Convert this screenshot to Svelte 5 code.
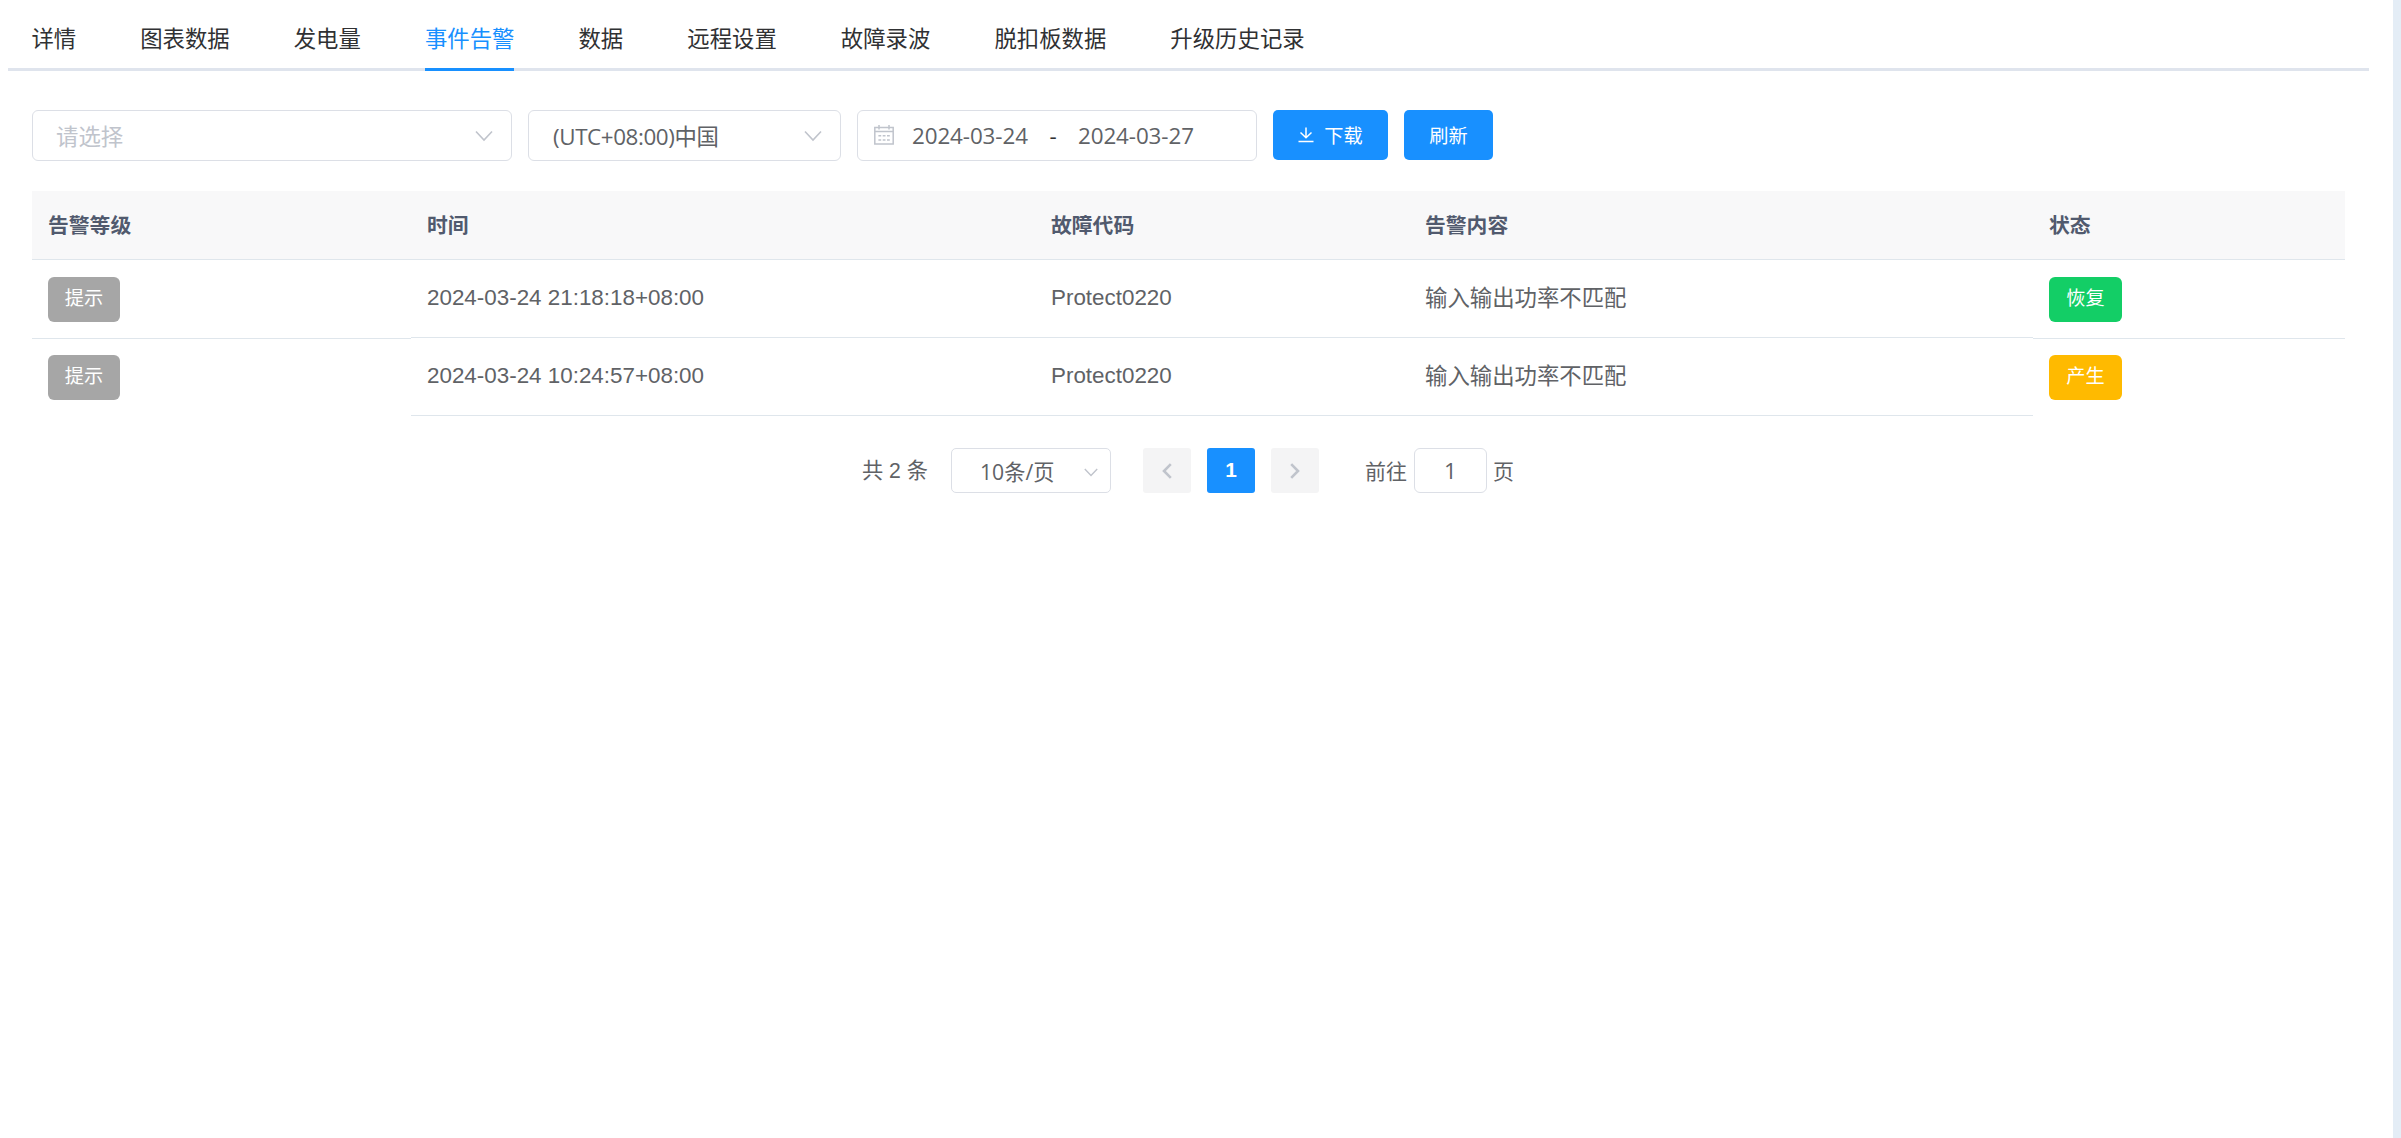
<script lang="ts">
  type Alarm = {
    time: string;
    code: string;
    content: string;
    status: 'recovered' | 'raised';
  };

  const tabs = [
    '详情',
    '图表数据',
    '发电量',
    '事件告警',
    '数据',
    '远程设置',
    '故障录波',
    '脱扣板数据',
    '升级历史记录',
  ];
  const columns = ['告警等级', '时间', '故障代码', '告警内容', '状态'];
  const statusLabels = { recovered: '恢复', raised: '产生' };

  const alarms: Alarm[] = [
    {
      time: '2024-03-24 21:18:18+08:00',
      code: 'Protect0220',
      content: '输入输出功率不匹配',
      status: 'recovered',
    },
    {
      time: '2024-03-24 10:24:57+08:00',
      code: 'Protect0220',
      content: '输入输出功率不匹配',
      status: 'raised',
    },
  ];

  let activeTab = $state('事件告警');
</script>

{#snippet arrow()}
  <svg class="arrow" viewBox="0 0 18 12">
    <path d="M1 1.5 L9 10 L17 1.5" fill="none" stroke="#c0c4cc" stroke-width="1.6" />
  </svg>
{/snippet}

<div class="page">
  <main>
    <nav>
      {#each tabs as tab}
        <button class="tab" class:active={tab === activeTab} onclick={() => (activeTab = tab)}>
          <span>{tab}</span>
        </button>
      {/each}
    </nav>

    <div class="filters">
      <div class="field level">
        <span class="placeholder">请选择</span>
        {@render arrow()}
      </div>
      <div class="field zone">
        <span class="ui">(UTC+08:00)中国</span>
        {@render arrow()}
      </div>
      <div class="field range">
        <svg class="calendar" viewBox="0 0 20 20">
          <g fill="none" stroke="#c0c4cc" stroke-width="1.5">
            <path d="M0.8 2.5 H19.2 V19 H0.8 Z M0.8 6.5 H19.2 M5 0 V4.5 M15 0 V4.5" />
            <path d="M4.4 10.7 H15.8 M4.4 15 H15.8" stroke-dasharray="2.8 1.5" />
          </g>
        </svg>
        <span class="date ui">2024-03-24</span>
        <span class="dash ui">-</span>
        <span class="date ui">2024-03-27</span>
      </div>
      <button class="primary download">
        <svg viewBox="0 0 16 16">
          <path
            d="M8 0.5 V10.5 M2.5 5.5 L8 10.8 L13.5 5.5 M0.5 14.5 H15.5"
            fill="none"
            stroke="#fff"
            stroke-width="1.5"
          />
        </svg>
        下载
      </button>
      <button class="primary refresh">刷新</button>
    </div>

    <div class="table">
      <div class="row head">
        {#each columns as column}
          <div class="cell">{column}</div>
        {/each}
      </div>
      {#each alarms as alarm}
        <div class="row">
          <div class="cell tagged"><span class="tag hint">提示</span></div>
          <div class="cell">{alarm.time}</div>
          <div class="cell">{alarm.code}</div>
          <div class="cell content">{alarm.content}</div>
          <div class="cell tagged">
            <span class="tag {alarm.status}">{statusLabels[alarm.status]}</span>
          </div>
        </div>
      {/each}
    </div>

    <div class="pagination">
      <span class="total">共 {alarms.length} 条</span>
      <div class="size">
        <span class="ui">10条/页</span>
        <svg viewBox="0 0 14 9">
          <path d="M0.8 1 L7 7.5 L13.2 1" fill="none" stroke="#c0c4cc" stroke-width="1.4" />
        </svg>
      </div>
      <button class="pager prev" aria-label="prev">
        <svg viewBox="0 0 10 16">
          <path d="M8.8 1.2 L2 8 L8.8 14.8" fill="none" stroke="#c0c4cc" stroke-width="2.6" />
        </svg>
      </button>
      <button class="pager current">1</button>
      <button class="pager next" aria-label="next">
        <svg viewBox="0 0 10 16">
          <path d="M1.2 1.2 L8 8 L1.2 14.8" fill="none" stroke="#c0c4cc" stroke-width="2.6" />
        </svg>
      </button>
      <span class="jump">前往</span>
      <div class="jump-input ui">1</div>
      <span class="jump">页</span>
    </div>
  </main>
</div>

<style>
  :global(body) {
    background: #e4edf6;
  }

  * {
    box-sizing: border-box;
  }

  .page {
    height: 1138px;
    padding-right: 8px;
    font-family: 'Liberation Sans', 'Noto Sans CJK SC', sans-serif;
    font-size: 22.4px;
    color: #606266;
  }

  main {
    height: 100%;
    padding: 0 24px 0 8px;
    background: #fff;
  }

  button {
    margin: 0;
    padding: 0;
    border: 0;
    background: none;
    font: inherit;
    color: inherit;
  }

  svg {
    display: block;
    flex: none;
  }

  nav {
    display: flex;
    gap: 64px;
    height: 71px;
    padding-left: 23.4px;
    border-bottom: 3px solid #dfe4ed;
  }

  .tab {
    height: 71px;
    padding-top: 6px;
    border-bottom: 3px solid transparent;
    color: #303133;
    white-space: nowrap;
  }

  .tab.active {
    border-bottom-color: #1890ff;
    color: #1890ff;
  }

  .ui {
    font-family: 'Open Sans', 'Noto Sans CJK SC', sans-serif;
  }

  .filters {
    display: flex;
    gap: 16px;
    padding: 39px 0 0 24px;
  }

  .field {
    display: flex;
    align-items: center;
    height: 51px;
    border: 1px solid #dcdfe6;
    border-radius: 6px;
  }

  .field .arrow {
    width: 18px;
    height: 12px;
    margin-left: auto;
  }

  .level {
    width: 480px;
    padding: 0 18px 0 23px;
  }

  .placeholder {
    padding-bottom: 2px;
    color: #c0c4cc;
  }

  .zone {
    width: 313px;
    padding: 0 18px 0 24px;
    letter-spacing: -0.4px;
  }

  .zone .ui {
    padding-bottom: 1px;
  }

  .range {
    width: 400px;
    padding-left: 16px;
  }

  .calendar {
    width: 20px;
    height: 20px;
    margin: 0 18px 1px 0;
  }

  .date {
    width: 116px;
    letter-spacing: -0.1px;
    white-space: nowrap;
  }

  .dash {
    width: 50px;
    color: #303133;
    text-align: center;
  }

  .primary {
    display: flex;
    justify-content: center;
    align-items: center;
    height: 50px;
    border-radius: 5px;
    background: #1890ff;
    color: #fff;
    font-size: 19.2px;
  }

  .download {
    gap: 10px;
    width: 115px;
  }

  .download svg {
    width: 16px;
    height: 16px;
  }

  .refresh {
    width: 89px;
  }

  .table {
    width: 2313px;
    height: 225px;
    margin: 30px 0 0 24px;
    overflow: hidden;
  }

  .row {
    display: grid;
    grid-template-columns: 379px 624px 374px 624px 312px;
    height: 78px;
  }

  .cell {
    display: flex;
    align-items: center;
    height: 78px;
    padding: 0 16px 2px;
    border-bottom: 1px solid #dfe6ec;
  }

  .content {
    padding-bottom: 5px;
  }

  .tagged {
    align-items: flex-start;
    height: 79px;
    padding-top: 17px;
  }

  .head {
    height: 69px;
  }

  .head .cell {
    height: 69px;
    padding-bottom: 3px;
    background: #f8f8f9;
    color: #515a6e;
    font-size: 20.8px;
    font-weight: bold;
  }

  .tag {
    width: 73px;
    height: 45px;
    border-radius: 6px;
    color: #fff;
    font-size: 19.2px;
    line-height: 43px;
    text-align: center;
  }

  .hint {
    width: 72px;
    background: #a6a6a6;
  }

  .recovered {
    background: #13ce66;
  }

  .raised {
    background: #ffba00;
  }

  .pagination {
    display: flex;
    align-items: center;
    height: 45px;
    margin-top: 32px;
    padding-left: 854px;
    font-size: 20.8px;
  }

  .total {
    width: 89px;
    padding-bottom: 4px;
    font-size: 21.2px;
  }

  .size {
    display: flex;
    justify-content: space-between;
    align-items: center;
    width: 160px;
    height: 45px;
    margin-right: 32px;
    padding: 0 12px 1px 28px;
    border: 1px solid #dcdfe6;
    border-radius: 5px;
    font-size: 21.2px;
  }

  .size svg {
    width: 14px;
    height: 9px;
    margin-top: 5px;
  }

  .pager {
    display: flex;
    justify-content: center;
    align-items: center;
    width: 48px;
    height: 45px;
    margin-right: 16px;
    border-radius: 3px;
    background: #f4f4f5;
  }

  .pager svg {
    width: 10px;
    height: 16px;
  }

  .current {
    padding-bottom: 2px;
    background: #1890ff;
    color: #fff;
    font-weight: bold;
  }

  .next {
    margin-right: 46px;
  }

  .jump {
    padding-bottom: 1px;
    font-size: 21px;
  }

  .jump-input {
    width: 73px;
    height: 45px;
    margin: 0 6px 0 7px;
    border: 1px solid #dcdfe6;
    border-radius: 6px;
    font-size: 22.4px;
    line-height: 43px;
    text-align: center;
  }
</style>
